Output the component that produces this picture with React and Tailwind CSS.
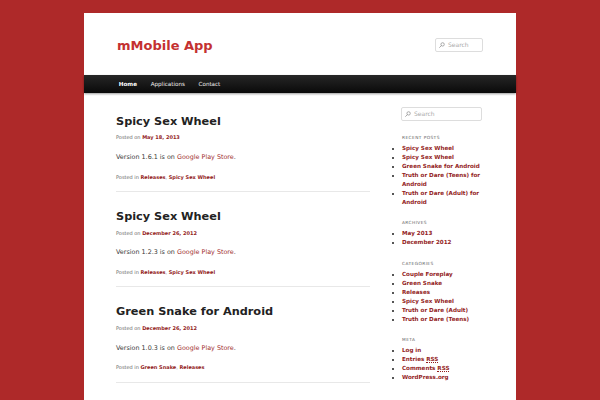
import React from "react";

const posts = [
  { title: "Spicy Sex Wheel", date: "May 18, 2013", version: "1.6.1", cats: ["Releases", "Spicy Sex Wheel"] },
  { title: "Spicy Sex Wheel", date: "December 26, 2012", version: "1.2.3", cats: ["Releases", "Spicy Sex Wheel"] },
  { title: "Green Snake for Android", date: "December 26, 2012", version: "1.0.3", cats: ["Green Snake", "Releases"] },
];

const widgets = [
  {
    title: "Recent Posts",
    items: [
      "Spicy Sex Wheel",
      "Spicy Sex Wheel",
      "Green Snake for Android",
      "Truth or Dare (Teens) for Android",
      "Truth or Dare (Adult) for Android",
    ],
  },
  { title: "Archives", items: ["May 2013", "December 2012"] },
  {
    title: "Categories",
    items: [
      "Couple Foreplay",
      "Green Snake",
      "Releases",
      "Spicy Sex Wheel",
      "Truth or Dare (Adult)",
      "Truth or Dare (Teens)",
    ],
  },
];

const SearchIcon = () => (
  <svg viewBox="0 0 10 10" className="w-[6px] h-[6px] shrink-0" fill="none" stroke="#9a9a9a" strokeWidth="1.4">
    <circle cx="6" cy="4" r="2.8" />
    <path d="M4 6 L1 9" strokeLinecap="round" />
  </svg>
);

const SearchBox = ({ className }) => (
  <div className={`flex items-center gap-[3px] pl-[3px] border border-[#ddd] rounded-[2px] bg-white ${className}`}>
    <SearchIcon />
    <span className="text-[6px] leading-none text-[#aaa]">Search</span>
  </div>
);

const Post = ({ post }) => (
  <article className="pt-[18px] pb-[10.3px] border-b border-[#e8e8e8]">
    <h2 className="text-[11.3px] leading-[14px] font-bold text-[#222]">{post.title}</h2>
    <div className="mt-[4.7px] text-[5px] leading-[8px] text-[#666]">
      Posted on <span className="font-bold text-[#931d1d]">{post.date}</span>
    </div>
    <p className="mt-[10.9px] text-[6.4px] leading-[10px] text-[#373737]">
      Version {post.version} is on <span className="text-[#a12f2f]">Google Play Store</span>.
    </p>
    <div className="mt-[10.5px] text-[5px] leading-[8px] text-[#666]">
      Posted in{" "}
      <span className="font-bold text-[#931d1d]">{post.cats[0]}</span>,{" "}
      <span className="font-bold text-[#931d1d]">{post.cats[1]}</span>
    </div>
  </article>
);

const Widget = ({ title, children }) => (
  <div className="mb-[13.6px]">
    <h3 className="text-[4.3px] leading-[6px] uppercase tracking-[0.1em] text-[#666] mb-[3px]">{title}</h3>
    <ul className="list-[square] text-[5.6px] leading-[9px] font-bold text-[#931d1d] marker:text-[#555]">
      {children}
    </ul>
  </div>
);

export default function App() {
  return (
    <div className="h-[400px] overflow-hidden bg-[#ae2929] pt-[13px] font-['DejaVu_Sans',sans-serif]">
      <div className="mx-auto w-[432px] min-h-[400px] bg-white">
        {/* HEADER */}
        <header className="flex justify-between items-start px-[33px] pt-[25px] pb-[21px]">
          <h1 className="text-[13px] leading-[16px] font-bold text-[#c43131]">mMobile App</h1>
          <SearchBox className="w-[48px] h-[14px]" />
        </header>

        {/* NAV */}
        <nav className="h-[18px] flex items-center pl-[28px] bg-linear-to-b from-[#272727] to-[#0a0a0a] shadow-[0_1px_2px_rgba(0,0,0,0.4)]">
          <span className="px-[6.85px] text-[5.6px] font-bold text-white">Home</span>
          <span className="px-[6.85px] text-[5.6px] text-[#eee]">Applications</span>
          <span className="px-[6.85px] text-[5.6px] text-[#eee]">Contact</span>
        </nav>

        {/* BODY */}
        <div className="flex">
          <main className="ml-[32px] w-[254px] pt-[3.5px]">
            {posts.map((p, i) => (
              <Post key={i} post={p} />
            ))}
          </main>

          <aside className="ml-[32px] w-[82px] pt-[14px]">
            <SearchBox className="w-[81px] h-[13.5px] -ml-[1px]" />
            <div className="pt-[14px]">
              {widgets.map((w) => (
                <Widget key={w.title} title={w.title}>
                  {w.items.map((it, i) => (
                    <li key={i}>{it}</li>
                  ))}
                </Widget>
              ))}
              <Widget title="Meta">
                <li>Log in</li>
                <li>
                  Entries <abbr className="no-underline border-b border-dotted border-[#931d1d]">RSS</abbr>
                </li>
                <li>
                  Comments <abbr className="no-underline border-b border-dotted border-[#931d1d]">RSS</abbr>
                </li>
                <li>WordPress.org</li>
              </Widget>
            </div>
          </aside>
        </div>
      </div>
    </div>
  );
}
